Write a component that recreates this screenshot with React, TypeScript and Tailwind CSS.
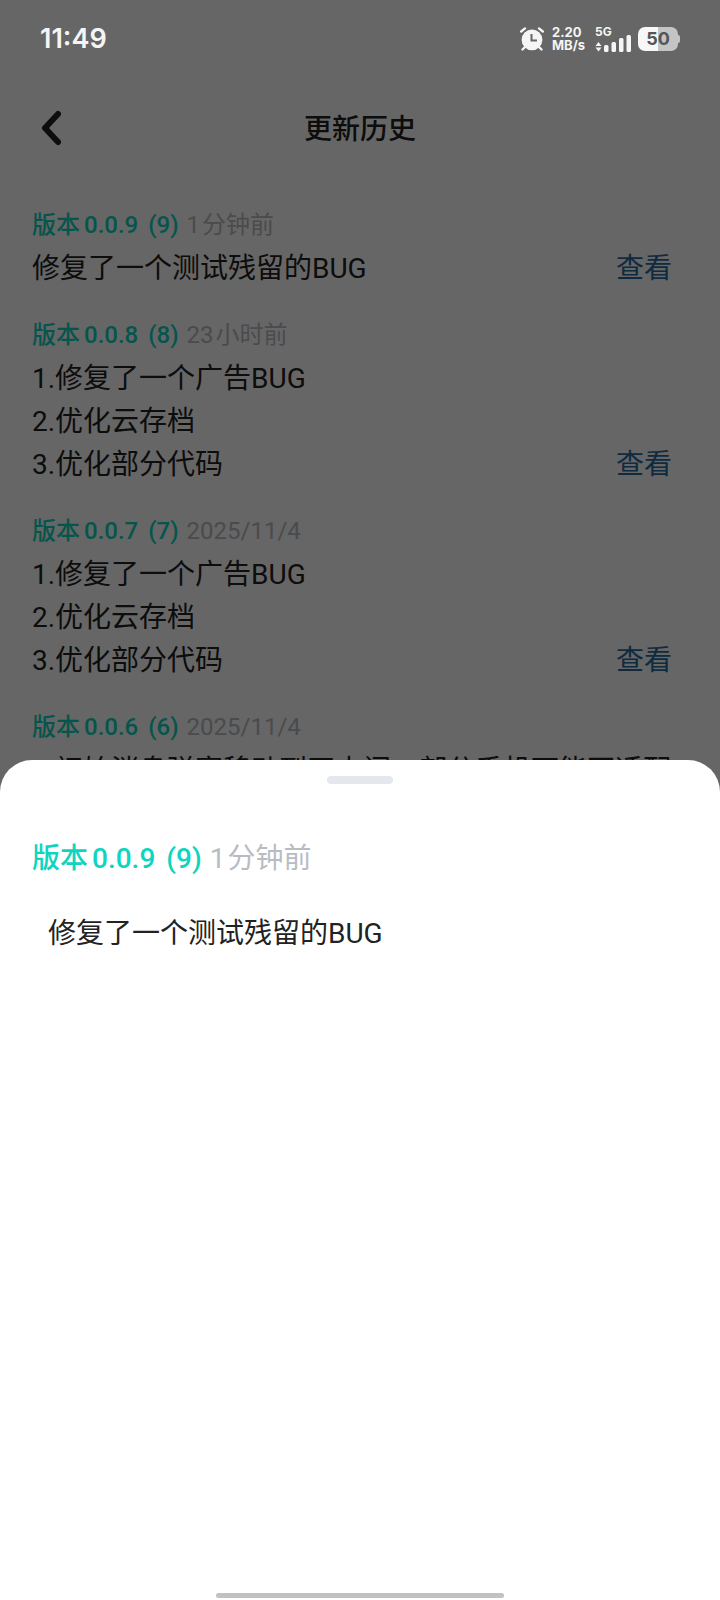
"use client"

import { useState } from 'react'

interface Release {
    name: string
    build: number
    count?: string
    time: string
    notes: string[]
}

const releases: Release[] = [
    { name: '0.0.9', build: 9, count: '1', time: '分钟前', notes: ['修复了一个测试残留的BUG'] },
    { name: '0.0.8', build: 8, count: '23', time: '小时前', notes: ['1.修复了一个广告BUG', '2.优化云存档', '3.优化部分代码'] },
    { name: '0.0.7', build: 7, time: '2025/11/4', notes: ['1.修复了一个广告BUG', '2.优化云存档', '3.优化部分代码'] },
    { name: '0.0.6', build: 6, time: '2025/11/4', notes: ['1.初始消息弹窗移动到正中间，部分手机可能不适配', '2.优化部分代码'] },
]

export default function App() {
    const [selected, setSelected] = useState(releases[0])

    return (
        <div className="relative flex flex-col h-screen overflow-hidden bg-white text-[#222222] font-[Roboto,'Noto_Sans_CJK_SC',sans-serif]">
            {/* History page */}
            <Header />
            <main className="flex flex-col gap-6 px-8 pt-7">
                {releases.map((release) => (
                    <section key={release.name}>
                        <div className="text-2xl leading-[43px]">
                            <VersionTitle release={release} />
                        </div>
                        {/* Long notes run the full width, the link sits over the last line */}
                        <div className="relative text-[28px] leading-[43px]">
                            {release.notes.map((note) => (
                                <p key={note}>{note}</p>
                            ))}
                            <button className="absolute right-4 bottom-0 text-[#2a6a9f]" onClick={() => setSelected(release)}>查看</button>
                        </div>
                    </section>
                ))}
            </main>

            {/* Dimmed backdrop */}
            <div className="absolute inset-0 bg-black/60" />
            <StatusBar />

            {/* Bottom sheet */}
            <div role="dialog" aria-label="版本详情" className="absolute inset-x-0 bottom-0 top-[760px] flex flex-col rounded-t-[32px] bg-white">
                <div className="mx-auto mt-4 h-2 w-[66px] rounded-full bg-[#e4e7ec]" />
                <div className="px-8 pt-[53px] text-[28px] leading-[43px]">
                    <h2><VersionTitle release={selected} /></h2>
                    <div className="px-4 pt-8">
                        {selected.notes.map((note) => (
                            <p key={note}>{note}</p>
                        ))}
                    </div>
                </div>
                <div className="mx-auto mt-auto mb-[2px] h-[5px] w-2/5 rounded-full bg-[#c1c1c1]" />
            </div>
        </div>
    )
}

function Header() {
    return (
        <header className="mt-20 grid h-24 shrink-0 grid-cols-3 items-center px-8">
            <button aria-label="返回" className="w-10">
                <svg className="h-10 w-10" viewBox="0 0 40 40" fill="none" stroke="currentColor" strokeWidth="6" strokeLinecap="round" strokeLinejoin="round">
                    <path d="M26 6L13 20L26 34" />
                </svg>
            </button>
            <h1 className="pt-1 text-center text-[28px] font-medium">更新历史</h1>
        </header>
    )
}

function VersionTitle({ release }: { release: Release }) {
    return (
        <>
            <span className="font-medium text-[#0dd5bf]">
                版本<span className="mx-1">{release.name}</span> ({release.build})
            </span>
            <span className="ml-2 text-[#b8bcc2]">
                {release.count && <span className="mr-0.5">{release.count}</span>}
                {release.time}
            </span>
        </>
    )
}

function StatusBar() {
    return (
        <div className="absolute inset-x-0 top-0 flex h-[78px] items-center justify-between pl-10 pr-10 font-[Inter,sans-serif] text-[#f5f5f5]">
            <span className="text-[27px] font-semibold">11:49</span>
            <div className="flex items-center">
                {/* Alarm clock */}
                <svg className="h-6 w-6" viewBox="0 0 24 24">
                    <g stroke="currentColor" strokeWidth="2.4" strokeLinecap="round">
                        <path d="M1.2 4.5L5 1.4M22.8 4.5L19 1.4M5 20L2.5 22.5M19 20L21.5 22.5" />
                    </g>
                    <circle cx="12" cy="12.8" r="10.4" fill="currentColor" />
                    <path d="M11.5 7V13.5H17" fill="none" stroke="#666666" strokeWidth="2" />
                </svg>
                <div className="ml-2 w-8 text-[13px] leading-[13px] font-bold">
                    <div>2.20</div>
                    <div>MB/s</div>
                </div>
                <div className="ml-[11px] w-9">
                    <div className="text-xs leading-[12px] font-bold">5G</div>
                    <svg className="-mt-1 h-[18px] w-9" viewBox="0 0 36 18" fill="currentColor">
                        <path d="M3.5 8L6.5 12H0.5ZM3.5 17.5L6.5 13.5H0.5Z" />
                        <rect x="9" y="11" width="4.5" height="7" rx="1.5" />
                        <rect x="16.5" y="8" width="4.5" height="10" rx="1.5" />
                        <rect x="24" y="4" width="4.5" height="14" rx="1.5" />
                        <rect x="31.5" y="1" width="4.5" height="17" rx="1.5" />
                    </svg>
                </div>
                {/* Battery */}
                <div className="ml-[7px] flex items-center">
                    <div className="flex h-6 w-10 items-center justify-center rounded-[7px] bg-linear-to-r from-[#f7f7f7] from-50% to-[#c4c4c4] to-50% text-lg font-bold text-[#555555]">50</div>
                    <div className="h-2 w-[2px] rounded-r bg-[#c4c4c4]" />
                </div>
            </div>
        </div>
    )
}
